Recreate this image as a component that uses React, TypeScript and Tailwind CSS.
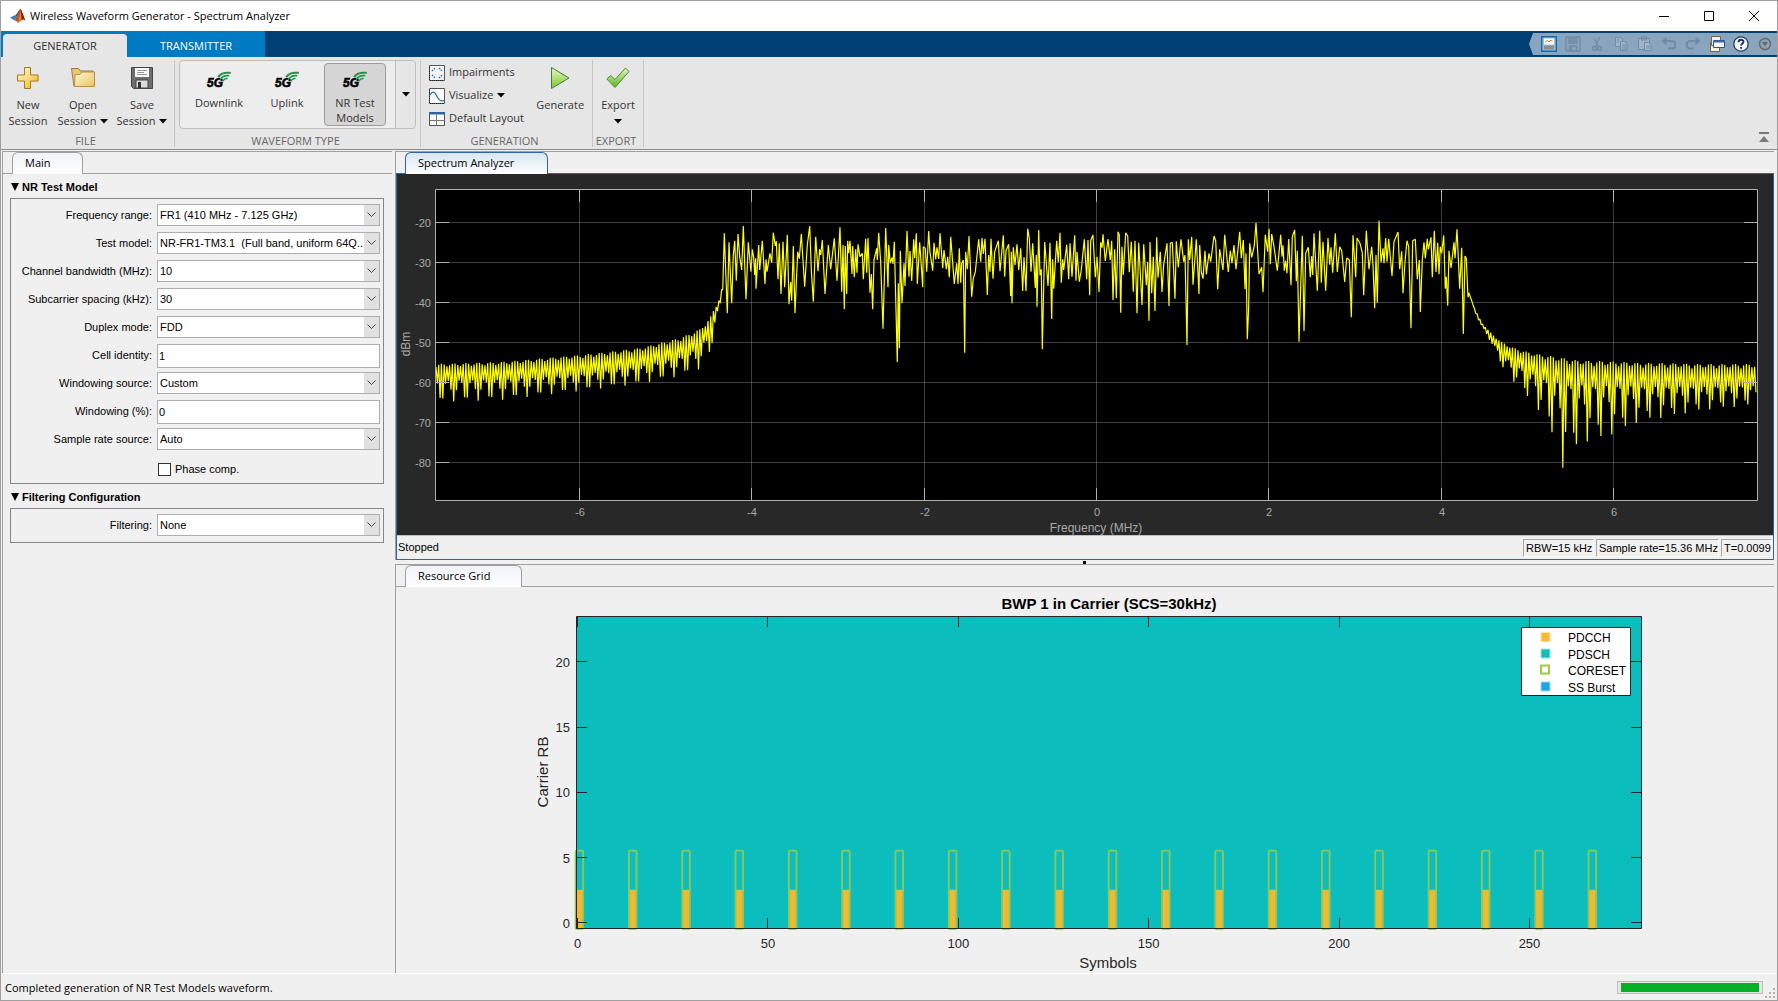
import { useState } from 'react';
import type { ReactNode } from 'react';

const UI_FONT = 'font-["Open_Sans","Noto_Sans",sans-serif]';
const FORM_FONT = 'font-["Liberation_Sans",Arial,sans-serif]';

/* ---------- spectrum data ---------- */

// in-band trace as x, y pairs, three units to a chart unit
const BAND_LOW = [
    38, 240, 43, 70, 52, 310, 57, 97, 65, 280, 70, 135, 74, 92, 79, 212, 84, 72, 89, 140, 95, 180, 100, 48, 108, 268, 115, 97,
    123, 185, 127, 118, 131, 143, 134, 195, 137, 145, 138, 236, 146, 105, 149, 180, 157, 92, 165, 222, 168, 148, 171, 185,
    180, 130, 185, 158, 190, 68, 196, 108, 199, 93, 204, 208, 208, 100, 213, 252, 219, 95, 224, 232, 232, 74, 237, 283,
    242, 216, 245, 272, 250, 108, 255, 310, 263, 125, 268, 146, 274, 72, 284, 230, 292, 105, 299, 48, 304, 180, 310, 275,
    317, 80, 324, 184, 329, 118, 332, 135, 337, 90, 345, 252, 355, 105, 362, 178, 373, 85, 381, 212, 390, 52, 395, 245,
    399, 105, 403, 298, 406, 108, 410, 252, 413, 92, 416, 130, 420, 92, 426, 192, 428, 108, 433, 202, 437, 118, 441, 188,
    444, 103, 450, 140, 457, 130, 460, 208, 467, 86, 470, 188, 474, 84, 480, 248, 484, 192, 488, 298, 492, 150, 500, 115,
    502, 150, 506, 68, 512, 158, 519, 356, 527, 54, 534, 232, 536, 105, 541, 160, 546, 143, 549, 162, 553, 95, 562, 456,
    565, 220, 568, 415, 571, 122, 576, 280, 582, 160, 585, 228, 591, 63, 597, 200, 600, 123, 605, 213, 611, 88, 614, 145,
    619, 70, 622, 222, 629, 97, 638, 232, 640, 110, 646, 115, 650, 185, 656, 63, 660, 128, 668, 182, 672, 98, 677, 148,
    681, 112, 686, 147, 690, 70, 698, 174, 702, 120, 709, 178, 713, 140, 718, 202, 722, 80, 733, 222, 740, 160, 744, 222,
    748, 115, 752, 218, 755, 160, 760, 150, 764, 428, 767, 125, 772, 178, 777, 78, 785, 260, 790, 205, 796, 186, 806, 88,
    812, 155, 816, 84, 820, 132, 825, 86, 832, 255, 836, 135, 840, 185, 843, 86, 849, 206, 854, 125, 865, 92, 870, 184,
    880, 76, 884, 200, 888, 122, 896, 103, 902, 258, 904, 125, 906, 280, 910, 112, 915, 165, 921, 103, 926, 180, 932, 115,
    938, 243, 942, 142, 948, 243, 953, 56, 958, 85, 963, 185, 968, 100, 976, 234, 979, 135, 981, 290, 986, 60, 990, 196,
    994, 178, 997, 418, 1004, 96, 1014, 228, 1020, 98, 1025, 327, 1028, 148, 1031, 236, 1040, 92, 1045, 157, 1050, 68,
    1054, 218, 1058, 148, 1061, 180, 1070, 104, 1076, 208, 1080, 100, 1086, 200, 1094, 76, 1098, 212, 1101, 125, 1108, 215,
    1114, 180, 1123, 88, 1130, 208, 1134, 90,
];

const BAND_HIGH = [
    14, 256, 17, 92, 24, 75, 31, 202, 36, 140, 42, 246, 47, 97, 51, 113, 54, 73, 61, 153, 69, 87, 76, 150, 80, 92, 84, 270,
    89, 118, 94, 265, 99, 65, 103, 75, 107, 308, 111, 110, 115, 195, 122, 68, 128, 78, 133, 187, 139, 95, 145, 245, 150, 92,
    156, 310, 161, 98, 171, 285, 176, 103, 184, 226, 188, 155, 192, 332, 195, 96, 200, 250, 205, 140, 210, 303, 215, 82,
    219, 203, 226, 125, 231, 246, 236, 163, 246, 100, 252, 288, 256, 100, 262, 97, 270, 266, 274, 94, 280, 172, 288, 88,
    296, 155, 300, 135, 306, 405, 310, 88, 314, 150, 320, 80, 324, 224, 334, 88, 342, 252, 344, 105, 349, 186, 354, 206,
    360, 122, 364, 193, 372, 130, 377, 155, 387, 78, 392, 92, 398, 238, 404, 118, 414, 180, 419, 74, 430, 186, 436, 122,
    441, 160, 447, 105, 453, 178, 464, 65, 469, 145, 475, 90, 480, 238, 483, 130, 487, 388, 491, 290, 494, 100, 500, 142,
    508, 107, 513, 38, 522, 192, 530, 172, 534, 247, 541, 74, 548, 125, 552, 56, 556, 163, 560, 72, 567, 110, 577, 182,
    587, 74, 591, 140, 594, 106, 598, 182, 602, 152, 606, 190, 611, 87, 618, 226, 622, 80, 629, 60, 634, 214, 637, 122,
    642, 395, 652, 77, 657, 363, 662, 130, 670, 112, 676, 202, 680, 138, 683, 195, 687, 70, 697, 242, 704, 62, 709, 218,
    714, 95, 722, 242, 729, 84, 734, 164, 738, 112, 743, 188, 751, 70, 757, 186, 764, 110, 770, 122, 779, 216, 785, 144,
    793, 150, 799, 322, 804, 76, 812, 202, 816, 84, 825, 100, 832, 128, 836, 256, 844, 62, 852, 178, 860, 110, 864, 165,
    869, 295, 873, 135, 877, 278, 882, 32, 888, 157, 894, 115, 897, 160, 902, 84, 906, 155, 911, 86, 921, 198, 927, 95,
    939, 66, 944, 178, 950, 124, 954, 250, 960, 155, 966, 92, 971, 110, 978, 355, 983, 92, 991, 88, 997, 208, 1003, 150,
    1006, 306, 1012, 150, 1017, 97, 1021, 145, 1027, 86, 1030, 118, 1038, 82, 1042, 202, 1048, 62, 1053, 186, 1058, 98,
    1062, 193, 1066, 110, 1070, 130, 1076, 76, 1081, 236, 1084, 200, 1088, 287, 1092, 122, 1098, 174, 1107, 97, 1110, 145,
    1116, 58, 1124, 236, 1130, 113, 1135, 372, 1140, 138, 1144, 145, 1149, 262,
];

type Envelope = [x: number, top: number, shallow: number, deep: number][];

const LEFT_SKIRT: Envelope = [
    [436, 364, 381, 402], [500, 362, 380, 400], [580, 355, 375, 391], [640, 348, 367, 384], [680, 338, 358, 376],
    [700, 329, 348, 369], [710, 318, 334, 355], [715, 307, 320, 333], [719, 299, 306, 313], [722, 288, 292, 298],
];

const RIGHT_SKIRT: Envelope = [
    [1469, 293, 293, 294], [1475, 310, 311, 312], [1482, 323, 326, 328], [1490, 332, 338, 341], [1500, 341, 354, 364],
    [1512, 347, 363, 380], [1524, 351, 371, 394], [1538, 354, 377, 410], [1551, 356, 382, 434], [1557, 357, 383, 450],
    [1563, 358, 384, 470], [1575, 360, 385, 450], [1590, 361, 386, 441], [1602, 361, 386, 440], [1626, 362, 386, 429],
    [1640, 363, 387, 422], [1665, 363, 387, 418], [1700, 364, 387, 411], [1757, 364, 386, 405],
];

function skirtPoints(envelope: Envelope, phase: number) {
    const points: string[] = [];
    const end = envelope[envelope.length - 1][0];
    let segment = 0;
    for (let i = 0, x = envelope[0][0]; x < end; i++, x = envelope[0][0] + i * 1.36) {
        while (x > envelope[segment + 1][0]) segment++;
        const [x0, t0, s0, d0] = envelope[segment];
        const [x1, t1, s1, d1] = envelope[segment + 1];
        const k = (x - x0) / (x1 - x0);
        const wave = Math.abs(Math.cos((Math.PI * (x - phase)) / 12.24));
        const top = t0 + (t1 - t0) * k + (1 - wave) * 0.2 * (s0 - t0);
        const shallow = s0 + (s1 - s0) * k;
        const deep = d0 + (d1 - d0) * k;
        const y = i % 2 ? shallow + (deep - shallow) * wave ** 3 : top;
        points.push(`${x.toFixed(1)},${y.toFixed(1)}`);
    }
    return points;
}

function bandPoints(data: number[], originX: number) {
    const points: string[] = [];
    for (let i = 0; i < data.length; i += 2) {
        points.push(`${(originX + data[i] / 3).toFixed(1)},${(210 + data[i + 1] / 3).toFixed(1)}`);
    }
    return points;
}

const TRACE = [
    ...skirtPoints(LEFT_SKIRT, 441.5),
    ...bandPoints(BAND_LOW, 710),
    ...bandPoints(BAND_HIGH, 1085),
    ...skirtPoints(RIGHT_SKIRT, 1563.3),
].join(' ');

/* ---------- icons ---------- */

function MatlabLogo() {
    return (
        <svg width="18" height="16" viewBox="0 0 18 16">
            <path d="M1 9.5 6 7.3l2 1.8-2.6 3.4z" fill="#3c7fb8" />
            <path d="M6 7.3C8.500 6.500 9.500 1.500 11.500 1L8 9.100z" fill="#2b4f80" />
            <path d="M5.400 12.500C7.500 11.500 9.500 3 11.500 1c1 0 3 8 5 11.500-2-1.500-3.500-1-5 .5-1 1-1.500 1.800-2.500 2-.5-1.500-1.800-2.500-3.600-2.500z" fill="#c8501e" />
            <path d="M11.500 1c1 0 3 8 5 11.500-2-1.500-2.500-1.500-3.500-1z" fill="#7d2010" />
            <path d="M9 15c1.500-4 2-8 2.300-12 .8 4 .6 7-.2 10z" fill="#f0a040" />
        </svg>
    );
}

function PlusIcon() {
    return (
        <svg width="24" height="24" viewBox="0 0 24 24">
            <defs>
                <linearGradient id="plus" x1="0" y1="0" x2="1" y2="1">
                    <stop offset="0" stopColor="#fffbe0" />
                    <stop offset="1" stopColor="#efb91c" />
                </linearGradient>
            </defs>
            <path d="M8.500 1.500h6v7.500h7.500v6h-7.500v7.500h-6V15H1.500V9h7z" fill="url(#plus)" stroke="#a8791a" />
        </svg>
    );
}

function FolderIcon() {
    return (
        <svg width="26" height="24" viewBox="0 0 26 24">
            <defs>
                <linearGradient id="folder" x1="0" y1="0" x2="1" y2="1">
                    <stop offset="0" stopColor="#fff9d8" />
                    <stop offset="1" stopColor="#ecc25e" />
                </linearGradient>
            </defs>
            <path d="M1.500 2.500h7l2 2.500h12.500v15.500H4z" fill="#e8c778" stroke="#a37a34" />
            <path d="M5 8.500h5l2-2.500h12.500v14.500H4.500z" fill="url(#folder)" stroke="#b98f42" />
        </svg>
    );
}

function SaveIcon() {
    return (
        <svg width="24" height="24" viewBox="0 0 24 24">
            <path d="M1.500 1.500h21v21h-19l-2-2z" fill="#6d6d6d" stroke="#444" />
            <path d="M5 2h14v9H5z" fill="#fafafa" />
            <path d="M7 4.500h10M7 6.500h7M7 8.500h10" stroke="#9a9a9a" />
            <path d="M6 14h12v8H6z" fill="#dcdcdc" stroke="#444" />
            <path d="M8 16h3v6H8z" fill="#333" />
        </svg>
    );
}

function FiveGIcon() {
    return (
        <svg width="26" height="22" viewBox="0 0 26 22">
            <text x="1" y="17" fontSize="12" fontWeight="900" fontStyle="italic" stroke="#000" strokeWidth=".6" fontFamily="Liberation Sans, Arial, sans-serif">5G</text>
            <g fill="none" stroke="#25944a" strokeLinecap="round">
                <path d="M12.500 6.500C15 3.500 19 2.200 24 2.800" strokeWidth="2" />
                <path d="M14.500 9C16.500 6.200 19 5.300 22.500 5.600" strokeWidth="1.800" />
                <path d="M17 10.800C18 9 19.300 8.300 21 8.400" strokeWidth="1.500" />
            </g>
        </svg>
    );
}

function ImpairmentsIcon() {
    return (
        <svg width="16" height="16" viewBox="0 0 16 16" className="shrink-0">
            <path d="M.5.5h15v15H.5z" fill="#f4f4f4" stroke="#555" />
            <path d="M.5 2v13.500H14" stroke="#222" strokeDasharray="1 1" fill="none" />
            <path d="M3 6l3-3M10 3l3 3M3 10l3 3M10 13l3-3" stroke="#1c78b4" strokeWidth="1.400" fill="none" strokeDasharray="1.500 1" />
        </svg>
    );
}

function VisualizeIcon() {
    return (
        <svg width="16" height="16" viewBox="0 0 16 16" className="shrink-0">
            <path d="M.5.5h15v15H.5z" fill="#fff" stroke="#555" />
            <path d="M.5 2v13.500H14" stroke="#222" strokeDasharray="1 1" fill="none" />
            <path d="M1 7c2-4 4.500-4 6.500.5s4 6.500 7.500 5" stroke="#2a6fa8" strokeWidth="1.200" fill="none" />
        </svg>
    );
}

function LayoutIcon() {
    return (
        <svg width="16" height="16" viewBox="0 0 16 16" className="shrink-0">
            <path d="M.5 1.500h15v13H.5z" fill="#fafafa" stroke="#555" />
            <path d="M0 1h16v2.500H0z" fill="#2f66a0" />
            <path d="M7.500 4v10.500M1 9.500h14.500" stroke="#777" />
        </svg>
    );
}

function PlayIcon() {
    return (
        <svg width="24" height="24" viewBox="0 0 24 24">
            <defs>
                <linearGradient id="play" x1="0" y1="0" x2="0" y2="1">
                    <stop offset="0" stopColor="#eaf7c0" />
                    <stop offset="1" stopColor="#7cc52a" />
                </linearGradient>
            </defs>
            <path d="M3.500 1.500 21 12 3.500 22.500z" fill="url(#play)" stroke="#3f7f45" />
        </svg>
    );
}

function CheckIcon() {
    return (
        <svg width="24" height="24" viewBox="0 0 24 24">
            <defs>
                <linearGradient id="check" x1="0" y1="0" x2="0" y2="1">
                    <stop offset="0" stopColor="#e3f4b4" />
                    <stop offset="1" stopColor="#5fb52b" />
                </linearGradient>
            </defs>
            <path d="m.8 13 4-3.500 4.200 4L19.500 2 23 5.500 9 21.500z" fill="url(#check)" stroke="#4b8a3c" />
        </svg>
    );
}

function Caret() {
    return (
        <svg width="8" height="5" viewBox="0 0 8 5" className="inline-block">
            <path d="M0 0h8L4 4.500z" />
        </svg>
    );
}

/* ---------- title bar and tool strip ---------- */

function TitleBar() {
    return (
        <header className="flex h-[30px] items-center bg-white pl-2">
            <MatlabLogo />
            <h1 className="ml-[3px] flex-1">Wireless Waveform Generator - Spectrum Analyzer</h1>
            <button aria-label="Minimize" className="flex h-full w-[46px] items-center justify-center">
                <svg width="10" height="10" viewBox="0 0 10 10"><path d="M0 5.500h10" stroke="#000" /></svg>
            </button>
            <button aria-label="Maximize" className="flex h-full w-11 items-center justify-center">
                <svg width="10" height="10" viewBox="0 0 10 10"><path d="M.5.5h9v9h-9z" stroke="#000" fill="none" /></svg>
            </button>
            <button aria-label="Close" className="flex h-full w-[46px] items-center justify-center">
                <svg width="10" height="10" viewBox="0 0 10 10"><path d="m0 0 10 10M10 0 0 10" stroke="#000" /></svg>
            </button>
        </header>
    );
}

function QuickButton({ label, children }: { label: string; children: ReactNode }) {
    return (
        <button aria-label={label} className="flex w-6 items-center justify-center">
            <svg width="16" height="16" viewBox="0 0 16 16" fill="none">{children}</svg>
        </button>
    );
}

function QuickAccess() {
    return (
        <div className="my-[2px] flex bg-[#89a5be] pl-2 [clip-path:polygon(4px_0,100%_0,100%_100%,4px_100%,0_50%)]">
            <QuickButton label="Show plot">
                <path d="M.7.700h14.600v14.600H.7z" fill="#8fc0e4" stroke="#1b68a8" strokeWidth="1.400" />
                <path d="M3 2.500h10v6H3z" fill="#fff" />
                <path d="m4.500 6 2-1.500L8 6l2-2 1.500 1" stroke="#e07820" />
                <path d="M3 9.500h10v4H3z" fill="#8e8e8e" />
            </QuickButton>
            <QuickButton label="Save">
                <path d="M1 1h14v14H2l-1-1zM4 1v6h8V1M4.500 15v-5h7v5M6 11v4M5 3h6M5 5h6" stroke="#6f8aa3" strokeWidth="1.300" />
            </QuickButton>
            <QuickButton label="Cut">
                <path d="M10.500 1 7 10M5.500 3 9 10" stroke="#6f8aa3" strokeWidth="1.300" />
                <circle cx="5.500" cy="12.500" r="2" stroke="#6f8aa3" strokeWidth="1.300" />
                <circle cx="10.500" cy="12.500" r="2" stroke="#6f8aa3" strokeWidth="1.300" />
            </QuickButton>
            <QuickButton label="Copy">
                <path d="M2.500 1.500h5l2 2v7h-7z" stroke="#6f8aa3" fill="#9db4c9" />
                <path d="M7.500 5.500h4l2.500 2v7H7.500zM9 9h4M9 11h4M9 13h4M4 4h3M4 6h2" stroke="#6f8aa3" fill="#9db4c9" />
            </QuickButton>
            <QuickButton label="Paste">
                <path d="M1.500 2.500h11v11h-11zM4.500 1h5v3h-5z" stroke="#6f8aa3" fill="#9db4c9" />
                <path d="M7.500 6.500h4l2.500 2v6H7.500zM9 10h4M9 12h4" stroke="#6f8aa3" fill="#a6bccf" />
            </QuickButton>
            <QuickButton label="Undo">
                <path d="M5.500 2 2 5l3.500 3M2 5h8.500c5 0 5 7.500 0 7.500H7" stroke="#6f8aa3" strokeWidth="2" />
            </QuickButton>
            <QuickButton label="Redo">
                <path d="M10.500 2 14 5l-3.500 3M14 5H5.500c-5 0-5 7.500 0 7.500H9" stroke="#6f8aa3" strokeWidth="2" />
            </QuickButton>
            <QuickButton label="Switch windows">
                <path d="M1.500 6.500h9v9h-9z" fill="#f5f0e0" stroke="#6b6552" />
                <path d="M2.500.5h9v9h-9z" fill="#f5f0e0" stroke="#6b6552" />
                <path d="M4.500 4.500h11v7h-11z" fill="#f2f7ff" stroke="#2f4f86" />
                <path d="M4.500 5.500h11" stroke="#3a68ac" strokeWidth="2" />
            </QuickButton>
            <QuickButton label="Help">
                <circle cx="8" cy="8" r="7.200" fill="#f4f8ff" stroke="#1f3d69" strokeWidth="1.300" />
                <path d="M5.500 6.300c0-3.500 5-3.300 5-.5 0 1.900-2.400 1.800-2.400 3.700M8.100 11v1.800" stroke="#1d2f50" strokeWidth="1.900" />
            </QuickButton>
            <QuickButton label="Toolbar options">
                <circle cx="8" cy="8" r="5.500" stroke="#666" strokeWidth="1.400" />
                <path d="M5 6h6l-3 4.500z" fill="#666" />
            </QuickButton>
        </div>
    );
}

function ToolTabs() {
    return (
        <nav className="flex h-[26px] bg-[#004074]">
            <div className="flex bg-[#007ac2] pl-[2px]">
                <button className="mt-[3px] w-[124px] rounded-t-sm bg-[#e6e6e6] pt-px text-[#333]">GENERATOR</button>
                <button className="w-[138px] pt-1 text-white">TRANSMITTER</button>
            </div>
            <div className="flex-1" />
            <QuickAccess />
        </nav>
    );
}

function Section({ title, className, children }: { title: string; className: string; children: ReactNode }) {
    return (
        <section className={`flex shrink-0 flex-col border-r border-[#c4c4c4] ${className}`}>
            <div className="flex flex-1">{children}</div>
            <h2 className="pr-1 text-center leading-[13px] text-[#666]">{title}</h2>
        </section>
    );
}

function BigButton({ icon, lines, caret, className }: { icon: ReactNode; lines: string[]; caret?: boolean; className: string }) {
    return (
        <button className={`flex flex-col items-center pt-[6px] leading-4 text-[#333] ${className}`}>
            <span className="mb-[7px]">{icon}</span>
            {lines.map((line, i) => (
                <span key={i} className="flex h-4 items-center gap-1 whitespace-nowrap">
                    {line}
                    {caret && i === lines.length - 1 && <Caret />}
                </span>
            ))}
        </button>
    );
}

function WaveformButton({ lines, selected }: { lines: string[]; selected?: boolean }) {
    return (
        <button
            aria-pressed={!!selected}
            className={`flex w-[62px] shrink-0 flex-col items-center rounded border pt-[6px] leading-[15px] text-[#333] ${selected ? 'border-[#9c9c9c] bg-[#d6d6d6]' : 'border-transparent'}`}
        >
            <span className="mb-[3px]"><FiveGIcon /></span>
            {lines.map((line) => <span key={line}>{line}</span>)}
        </button>
    );
}

function SmallButton({ icon, children }: { icon: ReactNode; children: ReactNode }) {
    return (
        <button className="flex h-[23px] items-center gap-1 whitespace-nowrap text-[#333]">
            {icon}
            {children}
        </button>
    );
}

function Ribbon() {
    return (
        <div className="flex h-[93px] border-b border-[#8c8c8c] bg-[#e6e6e6] pt-[3px] pb-[2px]">
            <Section title="FILE" className="w-[174px]">
                <BigButton icon={<PlusIcon />} lines={['New', 'Session']} className="w-[54px]" />
                <BigButton icon={<FolderIcon />} lines={['Open', 'Session']} caret className="w-14" />
                <BigButton icon={<SaveIcon />} lines={['Save', 'Session']} caret className="w-[62px]" />
            </Section>
            <Section title="WAVEFORM TYPE" className="w-[246px] pr-1 pl-1">
                <div className="flex h-[69px] w-[237px] rounded border border-[#bdbdbd] bg-[#ededed]">
                    <div className="flex flex-1 gap-[6px] py-[2px] pl-2">
                        <WaveformButton lines={['Downlink']} />
                        <WaveformButton lines={['Uplink']} />
                        <WaveformButton lines={['NR Test', 'Models']} selected />
                    </div>
                    <button aria-label="More waveforms" className="flex w-5 items-center justify-center rounded-r border-l border-[#bdbdbd] bg-[#e6e6e6]">
                        <Caret />
                    </button>
                </div>
            </Section>
            <Section title="GENERATION" className="w-[172px]">
                <div className="flex w-[108px] flex-col pt-px pl-2">
                    <SmallButton icon={<ImpairmentsIcon />}>Impairments</SmallButton>
                    <SmallButton icon={<VisualizeIcon />}>Visualize <Caret /></SmallButton>
                    <SmallButton icon={<LayoutIcon />}>Default Layout</SmallButton>
                </div>
                <BigButton icon={<PlayIcon />} lines={['Generate']} className="w-16" />
            </Section>
            <Section title="EXPORT" className="w-[51px]">
                <BigButton icon={<CheckIcon />} lines={['Export', '']} caret className="w-[50px]" />
            </Section>
            <div className="flex flex-1 items-end justify-end pr-2 pb-1">
                <button aria-label="Collapse tool strip">
                    <svg width="10" height="11" viewBox="0 0 10 11" fill="#7a7a7a"><path d="M0 0h10v2H0zM5 4l5 6H0z" /></svg>
                </button>
            </div>
        </div>
    );
}

/* ---------- left panel ---------- */

function PanelTab({ title, width, active }: { title: string; width: string; active?: boolean }) {
    return (
        <div className={`flex h-[23px] border-t border-t-[#a0a0a0] border-b pl-[9px] ${active ? 'border-b-[#2f66a0]' : 'border-b-[#a0a0a0]'}`}>
            <button
                className={`-mb-px rounded-t-md border border-b-0 bg-linear-to-b to-white pb-px pl-3 text-left ${width} ${active ? 'border-[#2f66a0] from-[#d8e6f0]' : 'border-[#a0a0a0] from-[#f0f2f8]'}`}
            >
                {title}
            </button>
        </div>
    );
}

function FormRow({ id, label, children }: { id: string; label: string; children: ReactNode }) {
    return (
        <div className="flex h-7 items-start">
            <label htmlFor={id} className="w-[142px] pr-[5px] text-right leading-[23px] whitespace-nowrap">{label}</label>
            {children}
        </div>
    );
}

function SelectRow({ id, label, options }: { id: string; label: string; options: string[] }) {
    return (
        <FormRow id={id} label={label}>
            <div className="relative mr-[3px] min-w-0 flex-1">
                <select id={id} className="block h-[22px] w-full appearance-none border border-[#adadb3] bg-white pr-1 pl-[2px]">
                    {options.map((option) => <option key={option}>{option}</option>)}
                </select>
                <span className="pointer-events-none absolute inset-y-px right-px flex w-[15px] items-center justify-center bg-[#e1e1e1]">
                    <svg width="9" height="6" viewBox="0 0 9 6"><path d="m.5.500 4 4 4-4" stroke="#444" fill="none" /></svg>
                </span>
            </div>
        </FormRow>
    );
}

function TextRow({ id, label, value }: { id: string; label: string; value: string }) {
    return (
        <FormRow id={id} label={label}>
            <input id={id} defaultValue={value} className="mr-[3px] h-6 min-w-0 flex-1 border border-[#adadb3] bg-white px-px" />
        </FormRow>
    );
}

function Group({ title, children }: { title: string; children: ReactNode }) {
    const [open, setOpen] = useState(true);
    return (
        <section>
            <button onClick={() => setOpen(!open)} className="flex h-6 items-center gap-[3px] pt-[2px] pl-px font-bold">
                <svg width="8" height="8" viewBox="0 0 8 8"><path d="M0 0h8L4 8z" /></svg>
                {title}
            </button>
            {open && <div className="border border-[#858585] pt-[5px] pl-1">{children}</div>}
        </section>
    );
}

function ParameterPanel() {
    return (
        <aside className="w-[390px] shrink-0 border-l border-[#a0a0a0]">
            <PanelTab title="Main" width="w-[71px]" />
            <div className={`mr-2 pl-[7px] ${FORM_FONT}`}>
                <Group title="NR Test Model">
                    <SelectRow id="range" label="Frequency range:" options={['FR1 (410 MHz - 7.125 GHz)']} />
                    <SelectRow id="model" label="Test model:" options={['NR-FR1-TM3.1\u00a0 (Full band, uniform 64Q...']} />
                    <SelectRow id="bandwidth" label="Channel bandwidth (MHz):" options={['10']} />
                    <SelectRow id="spacing" label="Subcarrier spacing (kHz):" options={['30']} />
                    <SelectRow id="duplex" label="Duplex mode:" options={['FDD']} />
                    <TextRow id="cell" label="Cell identity:" value="1" />
                    <SelectRow id="windowing-source" label="Windowing source:" options={['Custom']} />
                    <TextRow id="windowing" label="Windowing (%):" value="0" />
                    <SelectRow id="rate" label="Sample rate source:" options={['Auto']} />
                    <label className="flex h-[27px] items-center gap-1 pl-[143px]">
                        <input type="checkbox" className="size-[13px] appearance-none border border-[#333] bg-white checked:bg-[#333]" />
                        Phase comp.
                    </label>
                </Group>
                <Group title="Filtering Configuration">
                    <SelectRow id="filtering" label="Filtering:" options={['None']} />
                </Group>
            </div>
        </aside>
    );
}

/* ---------- spectrum ---------- */

const LEVELS = [-20, -30, -40, -50, -60, -70, -80];
const FREQUENCIES = [-6, -4, -2, 0, 2, 4, 6];

function SpectrumChart() {
    const levelY = (level: number) => 142.5 - level * 4;
    const freqX = (freq: number) => Math.round(1096 + freq * 86.17) + 0.5;
    return (
        <svg viewBox="397 174 1376 361" className="block h-auto w-full bg-[#282828]" fontFamily="Liberation Sans, Arial, sans-serif" fontSize="11" fill="#a8a8a8">
            <path d="M435.500 189.500h1322v311h-1322z" fill="#000" />
            <polyline points={TRACE} fill="none" stroke="#ffff00" strokeWidth="1.200" strokeLinejoin="bevel" />
            {LEVELS.map((level) => (
                <g key={level}>
                    <path d={`M436 ${levelY(level)}h1321`} stroke="#afafaf" strokeOpacity=".35" />
                    <path d={`M436 ${levelY(level)}h13M1757 ${levelY(level)}h-13`} stroke="#afafaf" />
                    <text x="431" y={levelY(level) + 4.5} textAnchor="end">{level}</text>
                </g>
            ))}
            {FREQUENCIES.map((freq) => (
                <g key={freq}>
                    <path d={`M${freqX(freq)} 190v310`} stroke="#afafaf" strokeOpacity=".35" />
                    <path d={`M${freqX(freq)} 190v12M${freqX(freq)} 500v-12`} stroke="#afafaf" />
                    <text x={freqX(freq) + 0.5} y="516" textAnchor="middle">{freq}</text>
                </g>
            ))}
            <path d="M435.500 189.500h1322v311h-1322z" fill="none" stroke="#afafaf" />
            <text x="1096" y="532" fontSize="12" textAnchor="middle">Frequency (MHz)</text>
            <text x="-344" y="410" fontSize="12" textAnchor="middle" transform="rotate(-90)">dBm</text>
        </svg>
    );
}

function StatusCell({ width, children }: { width: string; children: ReactNode }) {
    return <span className={`h-[18px] border border-[#a8a8a8] border-r-white border-b-white pl-[2px] leading-[17px] whitespace-nowrap ${width}`}>{children}</span>;
}

function SpectrumPanel() {
    return (
        <section className="border-l border-[#a0a0a0]">
            <PanelTab title="Spectrum Analyzer" width="w-[143px]" active />
            <div className="border-x border-b border-[#2f66a0]">
                <SpectrumChart />
                <div className={`flex h-6 items-center border-t border-[#c0c0c0] pl-px ${FORM_FONT}`}>
                    <span className="flex-1">Stopped</span>
                    <div className="flex gap-[2px] pr-px">
                        <StatusCell width="w-[71px]">RBW=15 kHz</StatusCell>
                        <StatusCell width="w-[123px]">Sample rate=15.36 MHz</StatusCell>
                        <StatusCell width="w-[51px]">T=0.0099</StatusCell>
                    </div>
                </div>
            </div>
        </section>
    );
}

/* ---------- resource grid ---------- */

const SLOTS = Array.from({ length: 20 }, (_, i) => i * 14);
const BLOCKS = [0, 5, 10, 15, 20];
const SYMBOLS = [0, 50, 100, 150, 200, 250];
const CHANNELS = [
    { name: 'PDCCH', fill: '#fbb93c', stroke: '#fde3a0' },
    { name: 'PDSCH', fill: '#12bdb9', stroke: '#a4e3e2' },
    { name: 'CORESET', fill: '#fff', stroke: '#9acb4d' },
    { name: 'SS Burst', fill: '#1ba4e8', stroke: '#a0dcf0' },
];

function ResourceChart() {
    const symbolX = (symbol: number) => 577.5 + symbol * 3.808;
    const blockY = (block: number) => 922.4 - block * 13.05;
    return (
        <svg viewBox="396 587 1378 386" className="block h-auto w-full" fontFamily="Liberation Sans, Arial, sans-serif" fontSize="13" fill="#262626">
            <text x="1109" y="609" fontSize="15" fontWeight="bold" textAnchor="middle" fill="#000">BWP 1 in Carrier (SCS=30kHz)</text>
            <path d="M576.500 616.500h1065v312h-1065z" fill="#0cbdbe" />
            {SLOTS.map((slot) => (
                <g key={slot}>
                    <rect x={symbolX(slot - 0.5)} y={blockY(2.5)} width="7.600" height="39" fill="#f0b934" />
                    <rect x={symbolX(slot - 0.5)} y={blockY(5.5)} width="7.600" height="78.300" rx="1" fill="none" stroke="#8dc857" strokeWidth="1.800" />
                </g>
            ))}
            <path d="M576.500 616.500h1065v312h-1065z" fill="none" stroke="#262626" />
            {BLOCKS.map((block) => (
                <g key={block}>
                    <path d={`M577 ${Math.round(blockY(block)) + 0.5}h10M1641 ${Math.round(blockY(block)) + 0.5}h-10`} stroke="#262626" />
                    <text x="570" y={blockY(block) + 5.5} textAnchor="end">{block}</text>
                </g>
            ))}
            {SYMBOLS.map((symbol) => (
                <g key={symbol}>
                    <path d={`M${Math.floor(symbolX(symbol)) + 0.5} 617v10M${Math.floor(symbolX(symbol)) + 0.5} 928v-10`} stroke="#262626" />
                    <text x={symbolX(symbol)} y="948" textAnchor="middle">{symbol}</text>
                </g>
            ))}
            <text x="1108" y="968" fontSize="15" textAnchor="middle">Symbols</text>
            <text x="-772" y="548" fontSize="15" textAnchor="middle" transform="rotate(-90)">Carrier RB</text>
            <path d="M1521.500 627.500h109v68h-109z" fill="#fff" stroke="#262626" />
            {CHANNELS.map((channel, i) => (
                <g key={channel.name}>
                    <rect x="1541" y={632.5 + i * 16.5} width={channel.name === 'CORESET' ? 8 : 9} height={channel.name === 'CORESET' ? 8 : 9} fill={channel.fill} stroke={channel.stroke} strokeWidth={channel.name === 'CORESET' ? 2 : 1} />
                    <text x="1568" y={642 + i * 16.5} fontSize="12" fill="#000">{channel.name}</text>
                </g>
            ))}
        </svg>
    );
}

function StatusBar() {
    return (
        <footer className="flex h-[27px] items-center border-t border-white pr-px pl-1">
            <span className="flex-1 pt-[3px]">Completed generation of NR Test Models waveform.</span>
            <div role="progressbar" aria-label="Generation progress" aria-valuenow={100} className="h-[13px] w-[146px] border border-[#bcbcbc] bg-[#e6e6e6] px-[3px] py-px">
                <div className="h-[9px] bg-[#06b025]" />
            </div>
            <svg width="12" height="12" viewBox="0 0 12 12" fill="#b8b0a0" className="mt-3 ml-[1px]">
                <path d="M9 1h2v2H9zM9 5h2v2H9zM5 5h2v2H5zM9 9h2v2H9zM5 9h2v2H5zM1 9h2v2H1z" />
            </svg>
        </footer>
    );
}

export default function App() {
    return (
        <div className={`flex min-h-screen flex-col border border-[#a0a0a0] bg-[#f0f0f0] text-[11px] text-black ${UI_FONT}`}>
            <TitleBar />
            <ToolTabs />
            <Ribbon />
            <main className="mt-px flex flex-1 gap-[3px] pl-px">
                <ParameterPanel />
                <div className="flex min-w-0 flex-1 flex-col pr-[3px]">
                    <SpectrumPanel />
                    <div className="flex h-1 items-center justify-center">
                        <span className="h-[3px] w-[3px] bg-black" />
                    </div>
                    <section className="flex-1 border-l border-[#a0a0a0]">
                        <PanelTab title="Resource Grid" width="w-[117px]" />
                        <ResourceChart />
                    </section>
                </div>
            </main>
            <StatusBar />
        </div>
    );
}
